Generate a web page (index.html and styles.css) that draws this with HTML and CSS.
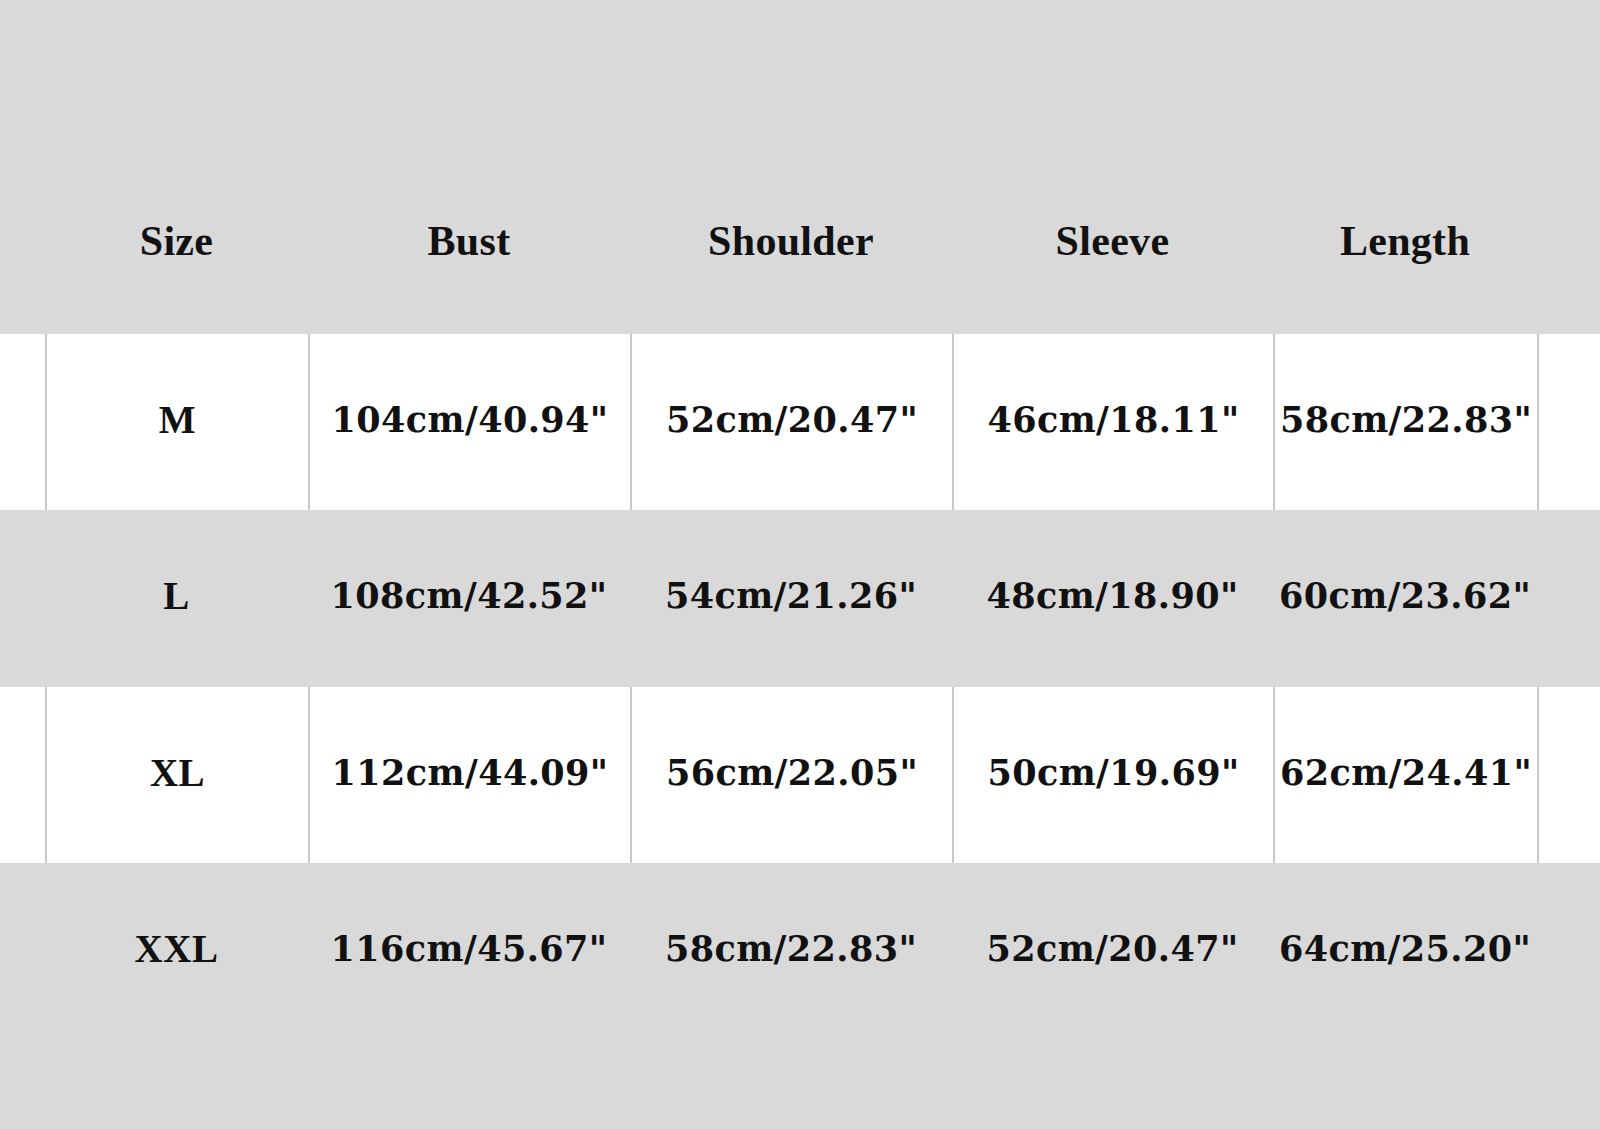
FILE: index.html
```html
<!DOCTYPE html>
<html lang="en">
<head>
<meta charset="utf-8">
<title>Size Chart</title>
<link rel="stylesheet" href="styles.css">
</head>
<body>
<div class="chart">
  <div class="row head">
    <div class="gut"></div>
    <div class="cell">Size</div>
    <div class="cell">Bust</div>
    <div class="cell">Shoulder</div>
    <div class="cell">Sleeve</div>
    <div class="cell">Length</div>
    <div class="gut"></div>
  </div>
  <div class="row white">
    <div class="gut"></div>
    <div class="cell size">M</div>
    <div class="cell">104cm/40.94"</div>
    <div class="cell">52cm/20.47"</div>
    <div class="cell">46cm/18.11"</div>
    <div class="cell">58cm/22.83"</div>
    <div class="gut last"></div>
  </div>
  <div class="row grey">
    <div class="gut"></div>
    <div class="cell size">L</div>
    <div class="cell">108cm/42.52"</div>
    <div class="cell">54cm/21.26"</div>
    <div class="cell">48cm/18.90"</div>
    <div class="cell">60cm/23.62"</div>
    <div class="gut last"></div>
  </div>
  <div class="row white">
    <div class="gut"></div>
    <div class="cell size">XL</div>
    <div class="cell">112cm/44.09"</div>
    <div class="cell">56cm/22.05"</div>
    <div class="cell">50cm/19.69"</div>
    <div class="cell">62cm/24.41"</div>
    <div class="gut last"></div>
  </div>
  <div class="row grey">
    <div class="gut"></div>
    <div class="cell size">XXL</div>
    <div class="cell">116cm/45.67"</div>
    <div class="cell">58cm/22.83"</div>
    <div class="cell">52cm/20.47"</div>
    <div class="cell">64cm/25.20"</div>
    <div class="gut last"></div>
  </div>
</div>
</body>
</html>
```
FILE: styles.css
```css
html, body {
  margin: 0;
  padding: 0;
  background: #d9d9d9;
  width: 1600px;
  height: 1129px;
  overflow: hidden;
}

.chart {
  display: flex;
  flex-direction: column;
  color: #111;
}

.row {
  display: grid;
  grid-template-columns: 45px 263px 322px 322px 321px 264px 1fr;
  height: 176px;
}

.row.grey {
  height: 177px;
}

.cell, .gut {
  box-sizing: border-box;
  display: flex;
  align-items: center;
  justify-content: center;
}

.head {
  height: 334px;
  padding-top: 148px;
  box-sizing: border-box;
}

.head .cell {
  font-family: "Liberation Serif", "Times New Roman", serif;
  font-weight: bold;
  font-size: 42px;
  letter-spacing: 0.3px;
}

.white .cell, .grey .cell {
  font-family: "DejaVu Serif", serif;
  font-weight: bold;
  font-size: 35px;
  letter-spacing: 0.4px;
  padding-bottom: 6px;
}

.white {
  background: #ffffff;
}

.white .cell, .white .gut.last {
  border-left: 2px solid #c9c9c9;
}

.white .cell.size, .grey .cell.size {
  font-family: "Liberation Serif", "Times New Roman", serif;
  font-size: 39px;
  letter-spacing: 0.5px;
}
```
